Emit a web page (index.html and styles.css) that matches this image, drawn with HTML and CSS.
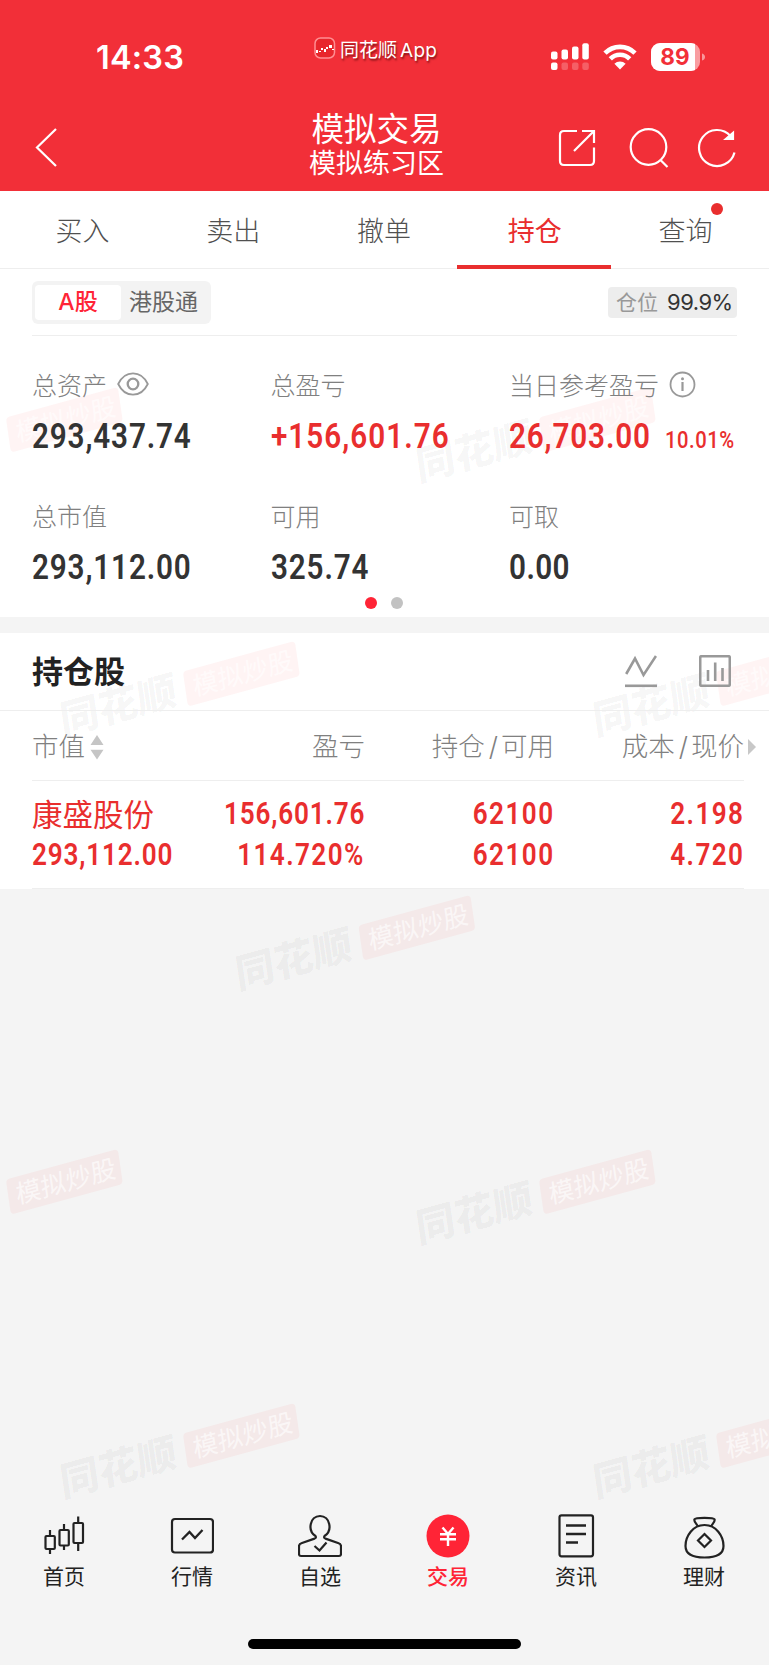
FILE: index.html
```html
<!DOCTYPE html>
<html lang="zh-CN">
<head>
<meta charset="utf-8">
<title>模拟交易</title>
<link rel="stylesheet" href="styles.css">
</head>
<body>
<div class="app">
  <header class="header">
    <div class="status">
      <span class="time">14:33</span>
      <span class="island">
        <svg width="22" height="22" viewBox="0 0 22 22"><rect x="1" y="1" width="19.5" height="20" rx="5.5" fill="#e8262c" stroke="#ff8f92" stroke-width="1.5"/><path d="M2 13h2v3H2zM5 14h2v1H5zM7 11h2v2H7zM10 12h2v3h-2zM12 10h2v2h-2zM15 8h3v3h-3zM18 12h2v1h-2z" fill="#fff"/></svg>
        <span>同花顺<b class="latin">App</b></span>
      </span>
      <span class="indicators">
        <svg width="39" height="28" viewBox="0 0 39 28" fill="#fff"><rect x="0" y="8.500" width="6.500" height="8" rx="2"/><rect x="10.500" y="6.500" width="6.500" height="10" rx="2"/><rect x="21" y="3.500" width="6.500" height="13" rx="2"/><rect x="31.300" y="0.300" width="6.500" height="16.200" rx="2"/><rect x="0" y="19.500" width="6.500" height="7.500" rx="2"/><g opacity=".23"><rect x="10.500" y="19.500" width="6.500" height="7.500" rx="2"/><rect x="21" y="19.500" width="6.500" height="7.500" rx="2"/><rect x="31.300" y="19.500" width="6.500" height="7.500" rx="2"/></g></svg>
        <svg class="wifi" width="34" height="26" viewBox="0 0 34 26"><g fill="none" stroke="#fff" stroke-width="4.600"><path d="M2 9.200a21 21 0 0 1 30 0"/><path d="M7.300 14.800a13.600 13.600 0 0 1 19.400 0"/></g><path d="M17 25.500l-5.600-5.700a8 8 0 0 1 11.200 0z" fill="#fff"/></svg>
        <span class="battery"><span class="battery-level">89</span></span>
        <svg width="4" height="8" viewBox="0 0 4 8"><path d="M0 .5q3 1 3 3.500t-3 3.500z" fill="#fff" opacity=".5"/></svg>
      </span>
    </div>
    <div class="bar">
      <svg class="back" width="24" height="42" viewBox="0 0 24 42"><path d="M22 2L3 20.500l19 18.500" fill="none" stroke="#fff" stroke-width="2.200"/></svg>
      <div class="titles"><h1>模拟交易</h1><p>模拟练习区</p></div>
      <div class="tools">
        <svg width="38" height="38" viewBox="0 0 38 38" fill="none" stroke="#fff" stroke-width="2.200"><path d="M19 2H6Q2 2 2 6v26q0 4 4 4h26q4 0 4-4V18.500M24 2h12v12M36 2L16 22"/></svg>
        <svg width="42" height="42" viewBox="0 0 42 42" fill="none" stroke="#fff" stroke-width="2.200"><circle cx="20.500" cy="20" r="17.800"/><path d="M32.500 33l7 7"/></svg>
        <svg width="40" height="42" viewBox="0 0 40 42" fill="none" stroke="#fff" stroke-width="2.200"><path d="M38.500 25.500a18 18 0 1 1-4-16.500"/><path d="M37 6v6h-7z" fill="#fff"/></svg>
      </div>
    </div>
  </header>

  <nav class="tabs">
    <a>买入</a><a>卖出</a><a>撤单</a><a class="on">持仓</a><a>查询<i class="badge"></i></a>
  </nav>

  <section class="account">
    <div class="market">
      <div class="segment"><span class="on">A股</span><span>港股通</span></div>
      <div class="ratio">仓位<b>99.9%</b></div>
    </div>
    <div class="stats">
      <div class="stat"><span class="label">总资产<svg class="eye" width="32" height="24" viewBox="0 0 32 24" fill="none" stroke="#999" stroke-width="1.800"><path d="M1.200 12C8-2.200 24-2.200 30.800 12 24 26.200 8 26.200 1.200 12z"/><circle cx="16" cy="12" r="5.300" stroke-width="2.300"/></svg></span><span class="value"><b class="num">293,437.74</b></span></div>
      <div class="stat"><span class="label">总盈亏</span><span class="value up"><b class="num plus">+156,601.76</b></span></div>
      <div class="stat"><span class="label">当日参考盈亏<svg class="info" width="27" height="27" viewBox="0 0 27 27" fill="none" stroke="#999" stroke-width="1.800"><circle cx="13.500" cy="13.500" r="12"/><path d="M13.500 11v9" stroke-width="2.200"/><circle cx="13.500" cy="7.800" r="1.500" fill="#999" stroke="none"/></svg></span><span class="value up"><b class="num daily">26,703.00</b><b class="num pct">10.01%</b></span></div>
      <div class="stat"><span class="label">总市值</span><span class="value"><b class="num">293,112.00</b></span></div>
      <div class="stat"><span class="label">可用</span><span class="value"><b class="num">325.74</b></span></div>
      <div class="stat"><span class="label">可取</span><span class="value"><b class="num short">0.00</b></span></div>
    </div>
    <div class="dots"><i class="on"></i><i></i></div>
  </section>

  <section class="holdings">
    <div class="heading">
      <h2>持仓股</h2>
      <svg width="32" height="34" viewBox="0 0 32 34" fill="none" stroke="#999" stroke-width="2.600"><path d="M1.200 20L10 4.500 18.500 21 31 2"/><path d="M0 31.800h32"/></svg>
      <svg width="32" height="32" viewBox="0 0 32 32" fill="none" stroke="#999"><rect x="1.200" y="1.200" width="29.600" height="29.600" rx="1.500" stroke-width="2.600"/><path d="M9 15v11M16.200 7.500V26M23.500 13v13" stroke-width="2.600"/></svg>
    </div>
    <div class="table">
      <div class="row head">
        <span>市值<svg class="sort" width="14" height="26" viewBox="0 0 14 26" fill="#c5c5c5"><path d="M7 1l6.500 10H.5zM7 25.500L.5 15.800h13z"/></svg></span>
        <span>盈亏</span><span>持仓<i class="slash">/</i>可用</span><span>成本<i class="slash">/</i>现价<svg class="more" width="8" height="16" viewBox="0 0 8 16"><path d="M0 0l8 8-8 8z" fill="#c8c8c8"/></svg></span>
      </div>
      <div class="row stock">
        <span><em>康盛股份</em><b class="num">293,112.00</b></span>
        <span><b class="num">156,601.76</b><b class="num wide">114.720%</b></span>
        <span><b class="num wide">62100</b><b class="num wide">62100</b></span>
        <span><b class="num wide">2.198</b><b class="num wide">4.720</b></span>
      </div>
    </div>
  </section>

  <nav class="dock">
    <a><svg width="44" height="44" viewBox="0 0 44 44" fill="none" stroke="#222" stroke-width="2.200"><rect x="3.500" y="22" width="9.300" height="13" rx="1"/><path d="M8 16v6M8 35v5M22 10v6M22 31.500v4.500M36.200 2.500V9M36.200 29v8"/><rect x="17.500" y="16" width="9.300" height="15.500" rx="1"/><rect x="31.500" y="9" width="9.500" height="20" rx="1"/></svg>首页</a>
    <a><svg width="44" height="44" viewBox="0 0 44 44" fill="none" stroke="#222" stroke-width="2.200"><rect x="2" y="5" width="41" height="33.500" rx="3"/><path d="M12 25.500l7.500-7.500 5.500 6 7.500-8" stroke-width="2.300"/></svg>行情</a>
    <a><svg width="44" height="44" viewBox="0 0 44 44" fill="none" stroke="#222" stroke-width="2.200"><path d="M17.500 22C9 16.500 12 2 22 2s13 14.500 4.500 20c-1 1.500 0 2.200 1 2.600L40 29q3 1 3 3v8q0 2-2 2H3q-2 0-2-2v-8q0-2 3-3l12.500-4.400c1-.4 2-1.100 1-2.600z"/><path d="M16.500 32l5 4.500 7-8"/></svg>自选</a>
    <a class="on"><svg width="44" height="44" viewBox="0 0 44 44"><circle cx="22" cy="22" r="21.500" fill="#ff2436"/><path d="M16.500 13.500L22 20l5.500-6.500M14 20.200h16M14 25.300h16M22 20v12" fill="none" stroke="#fff" stroke-width="2.400"/></svg>交易</a>
    <a><svg width="44" height="44" viewBox="0 0 44 44" fill="none" stroke="#222" stroke-width="2.200"><rect x="5.500" y="1.300" width="33.500" height="41" rx="2"/><path d="M12 11.500h20M12 20h20M12 28.500h12" stroke-width="2.300"/></svg>资讯</a>
    <a><svg width="44" height="45" viewBox="0 0 44 45" fill="none" stroke="#222" stroke-width="2.200"><path d="M16 12.500c-1.500-3-4.500-5-3.500-7.200 1-2 19-2 20 0 1 2.200-2 4.200-3.500 7.200"/><path d="M22.500 11C11 11 3.500 22 3.500 32q0 11.500 19 11.500t19-11.500C41.500 22 34 11 22.500 11z"/><path d="M22.500 20l6.500 6.500-6.500 6.500-6.500-6.500z"/></svg>理财</a>
  </nav>
  <div class="home-indicator"></div>

  <svg class="watermark" width="769" height="1665" viewBox="0 0 769 1665">
    <defs>
      <g id="mark">
        <text class="brand" x="-2.500" y="32" textLength="120">同花顺</text>
        <rect x="127" y="2" width="116" height="35.500" rx="4" fill="#ff2020" fill-opacity=".05"/>
        <text class="tag" x="135" y="29" textLength="103">模拟炒股</text>
      </g>
    </defs>
    <use href="#mark" transform="matrix(.965 -.264 .144 .99 -117 449)"/>
    <use href="#mark" transform="matrix(.965 -.264 .144 .99 416 449)"/>
    <use href="#mark" transform="matrix(.965 -.264 .144 .99 60 703)"/>
    <use href="#mark" transform="matrix(.965 -.264 .144 .99 593 703)"/>
    <use href="#mark" transform="matrix(.965 -.264 .144 .99 235.500 957)"/>
    <use href="#mark" transform="matrix(.965 -.264 .144 .99 -117 1211)"/>
    <use href="#mark" transform="matrix(.965 -.264 .144 .99 416 1211)"/>
    <use href="#mark" transform="matrix(.965 -.264 .144 .99 60 1465)"/>
    <use href="#mark" transform="matrix(.965 -.264 .144 .99 593 1465)"/>
  </svg>
</div>
</body>
</html>
```
FILE: styles.css
```css
* { box-sizing: border-box; margin: 0; padding: 0; }
body { background: #f4f4f4; font-family: Inter, "Noto Sans CJK SC", sans-serif; }
i, em { font-style: normal; }
svg { display: block; flex: none; }
.app { position: relative; isolation: isolate; width: 769px; height: 1665px; overflow: hidden; display: flex; flex-direction: column; }

.header { height: 191px; background: #f22f38; color: #fff; }
.status { height: 111px; display: grid; grid-template-columns: 314px 1fr 218px; align-items: start; }
.time { padding: 38px 0 0 96px; font-size: 32.5px; line-height: 40px; font-weight: 600; letter-spacing: .2px; }
.island { display: flex; gap: 4px; padding-top: 37px; font-size: 19px; line-height: 28px; text-shadow: 1px 2px 2px rgba(60, 0, 0, .6); }
.latin { font-weight: 400; margin-left: 3px; letter-spacing: .3px; }
.indicators { display: flex; align-items: center; padding-top: 43px; }
.wifi { margin-left: 13px; }
.battery { width: 49px; height: 28px; margin: 0 2px 0 14px; border-radius: 9px; overflow: hidden; background: #f99da1; }
.battery-level { display: block; width: 44px; height: 28px; padding-left: 4px; background: #fff; color: #f22f38; font-size: 22.5px; line-height: 28px; font-weight: 700; text-align: center; }
.bar { height: 80px; display: grid; grid-template-columns: 250px 1fr 250px; }
.back { margin: 16px 0 0 34px; }
.titles { text-align: center; white-space: nowrap; margin-left: -16px; }
.titles h1 { font-size: 32.5px; font-weight: 400; line-height: 37px; }
.titles p { font-size: 27px; line-height: 32px; }
.tools { display: flex; align-items: center; height: 74px; padding-left: 39px; gap: 32px; }
.tools svg:last-child { margin-left: -6px; }

.tabs { height: 78px; padding: 0 8px 0 7px; display: flex; background: #fff; border-bottom: 1px solid #eee; }
.tabs a { flex: 1; position: relative; text-align: center; font-size: 27px; line-height: 81px; height: 77px; color: #505050; font-weight: 300; }
.tabs .on { color: #e92e2e; font-weight: 400; }
.tabs .on::after { content: ""; position: absolute; left: -2px; right: -1px; bottom: -1px; height: 4px; background: #e92e2e; }
.badge { position: absolute; right: 38px; top: 12px; width: 12px; height: 12px; border-radius: 50%; background: #e92e2e; }

.account { height: 348px; background: #fff; }
.market, .stats, .heading, .table, .dock { position: relative; z-index: 1; }
.market { height: 67px; margin: 0 32px; padding-top: 12px; display: flex; justify-content: space-between; border-bottom: 1px solid #eee; }
.segment { display: flex; width: 179px; height: 43px; padding: 4px 3px; border-radius: 6px; background: #f3f3f3; color: #666; font-size: 23px; line-height: 35px; }
.segment .on { width: 86px; height: 35px; margin-right: 8px; border-radius: 4px; background: #fff; color: #ff2436; text-align: center; font-weight: 500; }
.ratio { width: 129px; height: 31px; margin-top: 6px; padding-left: 8px; border-radius: 4px; background: #ededed; color: #999; font-size: 21px; line-height: 31px; white-space: nowrap; }
.ratio b { margin-left: 9px; color: #333; font-weight: 400; font-size: 22px; letter-spacing: -.5px; }
.stats { height: 257px; padding: 28px 0 0 32px; display: grid; grid-template-columns: 238.5px 238.5px 1fr; grid-template-rows: 131px 126px; }
.stat { display: flex; flex-direction: column; }
.label { display: flex; align-items: center; height: 40px; font-size: 25px; color: #808080; font-weight: 300; }
.eye { margin-left: 10px; }
.info { margin-left: 10px; }
.value { display: flex; align-items: baseline; height: 50px; margin-top: 7px; color: #333; font-size: 34.5px; line-height: 50px; }
.num { font-family: Roboto, sans-serif; font-weight: 600; display: inline-block; letter-spacing: 1px; transform: scaleX(.86); transform-origin: left; white-space: nowrap; }
.up { color: #e92e2e; }
.plus { letter-spacing: 1.2px; }
.short { letter-spacing: .5px; }
.pct { font-size: 23.5px; font-weight: 500; margin-left: -9px; letter-spacing: .6px; }
.dots { display: flex; justify-content: center; gap: 14px; padding: 4px 1px 0 0; }
.dots i { width: 12px; height: 12px; border-radius: 50%; background: #c2c2c2; }
.dots .on { background: #ff2436; }

.holdings { margin-top: 16px; background: #fff; height: 256px; }
.heading { display: flex; align-items: center; height: 78px; padding: 0 38px 0 32px; border-bottom: 1px solid #eee; }
.heading h2 { flex: 1; font-size: 31px; font-weight: 700; color: #222; padding-bottom: 4px; }
.heading svg { margin-bottom: 1px; }
.heading svg + svg { margin-left: 42px; }
.row { display: grid; grid-template-columns: 150px 183px 189px 190px; width: 712px; margin-left: 32px; text-align: right; }
.row > span:first-child { text-align: left; }
.head { height: 70px; border-bottom: 1px solid #eee; font-size: 26.5px; line-height: 71px; color: #808080; white-space: nowrap; font-weight: 300; }
.head > span { position: relative; height: 69px; }
.slash { margin: 0 3px 0 4px; }
.sort { position: absolute; left: 58px; top: 23px; }
.more { position: absolute; right: -12px; top: 28px; }
.stock { height: 108px; padding-top: 12px; border-bottom: 1px solid #eee; color: #e92e2e; font-size: 31.5px; line-height: 41px; }
.stock > span { display: flex; flex-direction: column; align-items: flex-end; }
.stock > span:first-child { align-items: flex-start; }
.stock em { height: 41px; line-height: 43px; font-size: 30.5px; white-space: nowrap; }
.stock .num { transform-origin: right; transform: scaleX(.83); }
.stock .wide { letter-spacing: 1.7px; }
.stock > span:first-child .num { transform-origin: left; }

.dock { margin-top: 625px; display: flex; }
.dock a { width: 128px; height: 79px; display: flex; flex-direction: column; align-items: center; gap: 3px; font-size: 21px; line-height: 32px; color: #222; }
.dock .on { color: #ff2436; font-weight: 500; }
.dock a:last-child { gap: 2px; }
.home-indicator { width: 273px; height: 10px; margin: 46px auto 0; border-radius: 5px; background: #000; }

.watermark { position: absolute; left: 0; top: 0; z-index: 0; pointer-events: none; }
.brand { font-size: 40px; font-weight: 900; fill: #000; fill-opacity: .045; }
.tag { font-size: 25.5px; fill: #fff; fill-opacity: .65; }
```
